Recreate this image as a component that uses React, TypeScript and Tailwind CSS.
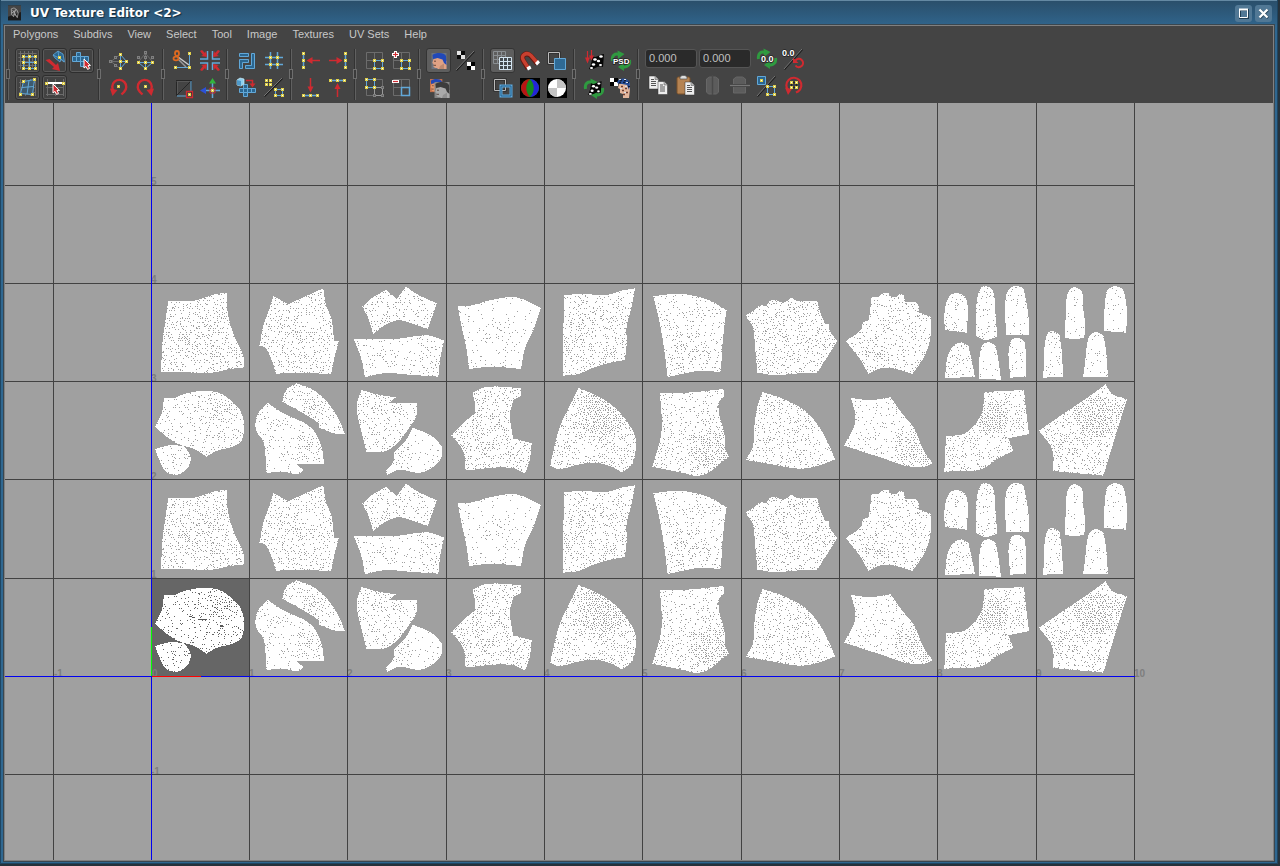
import React from "react";

/* ---------- UV shells ---------- */

type Shell = { pts: string; density: number; hot?: number[] };
type Block = { ox: number; upper: Shell[]; lower: Shell[] };

// Points are stored in thirds of a pixel, relative to (ox, 280).
const blocks: Block[] = [
  {
    ox: 150,
    upper: [
      { pts: "55,63 128,63 158,55 195,43 230,38 233,98 243,140 260,185 275,215 282,240 282,262 235,268 195,277 100,277 33,277 38,180 45,130", density: 0.38, hot: [150, 150, 60, 0.48] },
      { pts: "370,48 415,73 460,52 520,25 527,70 545,120 552,182 567,184 555,225 543,283 460,278 378,281 365,240 345,203 328,197 342,130 357,90", density: 0.34, hot: [410, 130, 40, 0.46] },
      { pts: "637,80 665,55 708,30 740,57 768,20 800,42 860,70 850,100 833,147 790,132 745,121 700,138 670,163 655,115", density: 0.3 },
      { pts: "612,178 745,176 800,168 840,167 882,182 872,230 865,290 790,285 700,280 645,292 635,240", density: 0.15, hot: [840, 220, 45, 0.36] },
    ],
    lower: [
      { pts: "42,354 75,353 100,343 160,333 210,340 250,368 276,402 276,480 265,492 195,515 170,530 135,508 85,492 50,470 15,440 35,400", density: 0.22, hot: [220, 375, 60, 0.44] },
      { pts: "15,507 65,495 105,500 122,535 108,570 75,585 45,572 28,540", density: 0.25 },
      { pts: "440,310 490,330 535,370 565,415 585,463 560,462 505,442 508,430 460,400 397,365 408,330", density: 0.3, hot: [490, 375, 35, 0.6] },
      { pts: "352,368 400,400 480,440 505,475 517,510 522,553 440,553 460,570 445,582 410,577 348,578 340,485 318,450 322,405", density: 0.17, hot: [480, 500, 45, 0.36] },
      { pts: "635,330 680,343 738,352 717,368 802,368 800,405 780,440 730,500 700,515 650,517 633,450 620,375", density: 0.28 },
      { pts: "788,443 845,468 877,500 875,530 850,560 810,578 745,570 712,585 708,573 730,545 733,518 765,485", density: 0.11, hot: [750, 520, 40, 0.3] },
    ],
  },
  {
    ox: 445,
    upper: [
      { pts: "38,77 75,77 130,62 215,52 288,84 265,150 240,205 228,267 140,260 72,267 65,210 50,140", density: 0.12, hot: [135, 150, 40, 0.3] },
      { pts: "357,45 420,42 480,46 530,32 570,25 560,80 545,140 545,190 540,240 500,247 440,265 400,282 355,287 355,170", density: 0.36 },
      { pts: "625,48 710,42 790,60 845,90 838,140 832,200 828,277 770,272 720,280 668,291 655,190 640,110", density: 0.25, hot: [740, 210, 55, 0.4] },
    ],
    lower: [
      { pts: "82,338 120,322 228,324 228,348 205,360 195,405 205,475 260,490 253,545 240,580 205,565 60,571 57,520 40,490 18,467 60,425 90,400 88,360", density: 0.38 },
      { pts: "400,324 450,345 500,375 550,430 572,475 572,510 560,555 530,577 500,560 445,548 395,555 340,567 315,557 345,440", density: 0.36, hot: [480, 395, 75, 0.9] },
      { pts: "645,340 740,337 835,327 838,348 823,365 822,400 838,460 842,510 852,530 765,588 720,580 622,560 640,500 650,450", density: 0.3, hot: [800, 510, 60, 0.75] },
    ],
  },
  {
    ox: 740,
    upper: [
      { pts: "18,106 40,92 60,77 80,77 90,63 105,60 130,68 145,60 155,53 170,62 232,62 240,95 255,132 268,132 268,150 292,183 232,278 180,280 100,285 52,278 45,200 38,140 20,112", density: 0.36 },
      { pts: "395,50 412,50 430,40 448,38 448,48 465,52 480,42 492,46 495,65 525,65 536,78 535,96 555,105 572,110 570,180 550,235 517,282 480,270 430,263 385,282 365,245 318,183 365,145 368,127 387,120", density: 0.31, hot: [405, 215, 25, 0.7] },
    ],
    lower: [
      { pts: "68,336 125,355 195,392 235,437 265,490 285,538 235,557 185,566 95,553 18,540 38,500 45,420 55,370", density: 0.34 },
      { pts: "333,354 390,360 452,352 490,405 520,440 550,510 578,550 555,560 500,558 430,535 312,497 345,430 345,400", density: 0.21, hot: [520, 510, 65, 0.65] },
    ],
  },
  {
    ox: 935,
    upper: [
      { pts: "30,150 28,110 35,65 50,43 68,40 88,48 97,70 95,158", density: 0.21 },
      { pts: "123,168 123,120 130,40 140,22 150,19 168,25 177,45 182,110 187,170 150,180", density: 0.22 },
      { pts: "213,165 213,50 222,28 243,17 265,25 275,70 282,130 282,165", density: 0.15 },
      { pts: "30,293 38,230 55,197 78,186 100,197 110,240 120,292", density: 0.24 },
      { pts: "132,297 135,220 145,193 162,186 182,197 190,240 198,299", density: 0.1 },
      { pts: "225,293 225,190 235,176 248,173 268,183 273,220 273,290", density: 0.11 },
      { pts: "390,173 392,110 397,45 408,25 422,21 440,35 445,90 450,130 448,173 420,178", density: 0.15 },
      { pts: "507,153 510,70 518,30 540,17 562,27 572,60 576,120 572,158", density: 0.11 },
      { pts: "325,293 330,190 340,158 352,152 373,162 380,210 384,290", density: 0.21 },
      { pts: "444,292 450,250 457,190 465,165 483,155 505,165 513,210 519,292", density: 0.15 },
    ],
    lower: [
      { pts: "147,336 267,330 272,380 282,462 220,475 235,512 190,535 140,567 28,575 33,468 90,460 140,400", density: 0.32, hot: [175, 410, 45, 0.9] },
      { pts: "512,313 530,340 576,357 550,440 505,587 355,573 352,510 312,452 380,405 440,365", density: 0.4, hot: [480, 410, 60, 0.9] },
    ],
  },
];

// Rounds the gentle bends of an outline and leaves its sharp corners alone.
function outline(pts: string): number[][] {
  const p = pts.split(" ").map((s) => s.split(",").map((v) => Number(v) / 3));
  const n = p.length;
  const tan = p.map((c, i) => {
    const a = p[(i + n - 1) % n];
    const b = p[(i + 1) % n];
    const u = [c[0] - a[0], c[1] - a[1]];
    const v = [b[0] - c[0], b[1] - c[1]];
    const lu = Math.hypot(u[0], u[1]);
    const lv = Math.hypot(v[0], v[1]);
    if ((u[0] * v[0] + u[1] * v[1]) / (lu * lv) < 0.66) return null;
    const w = [u[0] / lu + v[0] / lv, u[1] / lu + v[1] / lv];
    const lw = Math.hypot(w[0], w[1]);
    return [w[0] / lw, w[1] / lw];
  });
  const out: number[][] = [];
  for (let i = 0; i < n; i++) {
    const a = p[i];
    const b = p[(i + 1) % n];
    const len = Math.hypot(b[0] - a[0], b[1] - a[1]);
    const chord = [(b[0] - a[0]) / len, (b[1] - a[1]) / len];
    const ta = tan[i] ?? chord;
    const tb = tan[(i + 1) % n] ?? chord;
    for (let k = 0; k < 6; k++) {
      const t = k / 6;
      const h1 = 2 * t ** 3 - 3 * t ** 2 + 1;
      const h2 = t ** 3 - 2 * t ** 2 + t;
      const h3 = -2 * t ** 3 + 3 * t ** 2;
      const h4 = t ** 3 - t ** 2;
      out.push([0, 1].map((d) => h1 * a[d] + h2 * len * ta[d] + h3 * b[d] + h4 * len * tb[d]));
    }
  }
  return out;
}

function inside(x: number, y: number, poly: number[][]) {
  let hit = false;
  for (let i = 0, j = poly.length - 1; i < poly.length; j = i++) {
    const [xi, yi] = poly[i];
    const [xj, yj] = poly[j];
    if (yi > y !== yj > y && x < ((xj - xi) * (y - yi)) / (yj - yi) + xi) hit = !hit;
  }
  return hit;
}

// Gaps between the wireframe's vertices, drawn as one-pixel specks.
function specks(shell: Shell, poly: number[][]) {
  let seed = Math.round(poly[0][0] * 131 + poly[0][1] * 17) + 7;
  const rnd = () => {
    seed = (seed * 1664525 + 1013904223) % 4294967296;
    return seed / 4294967296;
  };
  const xs = poly.map((p) => p[0]);
  const ys = poly.map((p) => p[1]);
  let d = "";
  for (let y = Math.floor(Math.min(...ys)); y < Math.max(...ys); y += 2) {
    for (let x = Math.floor(Math.min(...xs)); x < Math.max(...xs); x += 2) {
      let p = shell.density;
      if (shell.hot) {
        const [hx, hy, hr, hp] = shell.hot;
        if (Math.hypot(x - hx / 3, y - hy / 3) < (hr / 3) * (0.7 + rnd() * 0.5)) p = hp;
      }
      const keep = rnd() < p;
      const px = x + (rnd() < 0.5 ? 0 : 1);
      const py = y + (rnd() < 0.25 ? 1 : 0);
      if (keep && inside(px + 0.5, py + 0.5, poly)) d += `M${px} ${py}h1v1h-1z`;
    }
  }
  return d;
}

function Shells({ row, y }: { row: "upper" | "lower"; y: number }) {
  return (
    <g shapeRendering="crispEdges">
      {blocks.map((b) =>
        b[row].map((s, i) => {
          const poly = outline(s.pts);
          return (
            <g key={`${b.ox}-${i}`} transform={`translate(${b.ox} ${y})`}>
              <polygon points={poly.map((p) => p.join(",")).join(" ")} fill="#fff" />
              <path d={specks(s, poly)} fill={y > 470 && row === "lower" && b.ox === 150 && i < 2 ? "#666" : "#a0a0a0"} />
            </g>
          );
        }),
      )}
    </g>
  );
}

const gridX = [53, 249, 347, 446, 544, 642, 741, 839, 937, 1036, 1134];
const gridY = [185, 283, 381, 479, 578, 774];
const labelsX: [number, string][] = [
  [54, "-1"], [152, "0"], [249, "1"], [347, "2"], [446, "3"], [544, "4"], [642, "5"],
  [741, "6"], [839, "7"], [937, "8"], [1036, "9"], [1134, "10"],
];
const labelsY: [number, string][] = [[185, "5"], [283, "4"], [382, "3"], [480, "2"], [578, "1"], [775, "-1"]];

function Viewport() {
  return (
    <svg className="block h-full w-full bg-[#a0a0a0]" role="img" aria-label="UV layout">
      <g transform="translate(-5 -103)">
        <rect x="152" y="579" width="97" height="97" fill="#666" />
        <g fill="#7e7e7e" fontFamily="'Liberation Sans', sans-serif" fontSize="10" fontWeight="700">
          {labelsX.map(([x, t]) => <text key={t} x={x} y="677">{t}</text>)}
          {labelsY.map(([y, t]) => <text key={t} x="151" y={y}>{t}</text>)}
        </g>
        <Shells row="upper" y={280} />
        <Shells row="lower" y={280} />
        <Shells row="upper" y={477} />
        <Shells row="lower" y={477} />
        <g fill="#424242">
          {gridX.map((x) => <rect key={x} x={x} y="103" width="1" height="3000" />)}
          {gridY.map((y) => <rect key={y} x="5" y={y} width="1130" height="1" />)}
        </g>
        <g fill="#555">
          <rect x="189" y="616" width="3" height="1" /><rect x="192" y="617" width="3" height="1" />
          <rect x="198" y="619" width="9" height="1" /><rect x="220" y="625" width="3" height="2" />
        </g>
        <rect x="151" y="103" width="1" height="3000" fill="#0000f0" />
        <rect x="5" y="676" width="1130" height="1" fill="#0000f0" />
        <rect x="151" y="627" width="1" height="49" fill="#00ff00" />
        <rect x="152" y="676" width="49" height="1" fill="#f00" />
      </g>
    </svg>
  );
}

/* ---------- Toolbar drawings (27 x 27 each) ---------- */

const BLUE = "#62a8d8";
const FILL = "#2b6690";
const LINE = "#6c6c6c";
const RED = "#cf2a30";

const P = ({ at, gray }: { at: number[][]; gray?: boolean }) => (
  <>
    {at.map(([x, y]) => (
      <g key={`${x},${y}`} shapeRendering="crispEdges">
        <rect x={x - 1} y={y - 1} width="3" height="3" fill={gray ? "#808080" : "#e0d04a"} />
        <rect x={x} y={y} width="1" height="1" fill={gray ? "#555" : "#fffff0"} />
      </g>
    ))}
  </>
);
const L = ({ d, c = BLUE, w = 1, f = "none" }: { d: string; c?: string; w?: number; f?: string }) => (
  <path d={d} stroke={c} strokeWidth={w} fill={f} />
);
const F = ({ d, c }: { d: string; c: string }) => <path d={d} fill={c} />;
const Cursor = ({ x, y }: { x: number; y: number }) => (
  <path transform={`translate(${x} ${y})`} d="M0 0v9l2-1.6 1.6 3 2-1-1.6-3H6.500z" fill={RED} stroke="#fff" strokeWidth="1" />
);
const Green = () => (
  <>
    <L d="M5.500 14C4.500 8.500 8 6 12 7.500M22.500 13c1 5-3 8-7 6.500" c="#2f9a40" w={3} />
    <F d="M10.500 3.500l7 3.500-6.500 5zM17 24l-6-4 5.500-4.500z" c="#2f9a40" />
  </>
);
const Checker = () => (
  <>
    <F d="M12 9c5 3 7-2 12-2l-1 13c-5-3-9 4-14 2 2-4 3-8 3-13z" c="#050505" />
    <g fill="#fff">
      <ellipse cx="15" cy="12.500" rx="1.800" ry="1.300" /><ellipse cx="21" cy="9.500" rx="1.800" ry="1.200" />
      <ellipse cx="18.500" cy="14" rx="1.700" ry="1.300" /><ellipse cx="13.500" cy="17.500" rx="1.700" ry="1.300" />
      <ellipse cx="20.500" cy="18" rx="1.500" ry="1.100" /><ellipse cx="11.500" cy="21" rx="1.600" ry="1" />
    </g>
  </>
);
const Quad = ({ s = 4 }: { s?: number }) => (
  <><rect width={s * 2} height={s * 2} fill="#000" /><path d={`M0 0h${s}v${s}h-${s}zM${s} ${s}h${s}v${s}h-${s}z`} fill="#fff" /></>
);
const Slash = ({ b = 22 }: { b?: number }) => (
  <><L d={`M22.500 4.500L4.500 ${b + 0.5}`} c="#1c1c1c" w={1.2} /><L d={`M22 4L4 ${b}`} c="#909090" w={0.7} /></>
);
const Page = ({ x, y }: { x: number; y: number }) => (
  <g transform={`translate(${x} ${y})`}>
    <path d="M0 0h6l3.500 3.500V13H0z" fill="#eee" stroke="#333" strokeWidth=".5" />
    <path d="M6 0v3.500h3.500" fill="#bbb" stroke="#555" strokeWidth=".5" />
    <path d="M2 3.500h3M2 5.500h5M2 7.500h5M2 9.500h5" stroke="#555" />
  </g>
);
const Head = ({ hair, skin, bg }: { hair: string; skin: string; bg: string }) => (
  <>
    <rect width="15" height="16" fill={bg} />
    <path d="M2 6L.8 10l1.200 1v3l2 1h2v1h9V8L9 4z" fill={skin} />
    <path d="M1 2C5-1 13-.5 14.500 3l.5 9-2.500-2-1.500-3.500-5-1.500-4.500 1z" fill={hair} />
    <path d="M2.500 8.200h2M2 12.300h2.500" stroke="#4a3028" strokeWidth=".8" />
    <path d="M7.500 16l1-3 4-2.500V16z" fill="#000" opacity=".15" />
  </>
);
const Rot = ({ flip }: { flip?: boolean }) => (
  <g transform={flip ? "translate(27 0) scale(-1 1)" : undefined}>
    <L d="M9 17.500A7 7 0 1 1 19 18L16.500 20.500" c={RED} w={2.4} />
    <F d="M5 14.500l7.500 1.500-5 6z" c={RED} />
    <P at={[[13, 12]]} />
  </g>
);
const Text = ({ x, y, s, t }: { x: number; y: number; s: number; t: string }) => (
  <text x={x} y={y} fontSize={s} fontWeight="700" fontFamily="'Liberation Sans', sans-serif" fill="#fff" stroke="#222" strokeWidth="1.500" paintOrder="stroke">{t}</text>
);
const gray4 = "M5.500 5.500h16v16h-16zM13.500 5.500v16M5.500 13.500h16";

const icons = {
  lattice: <>
    <L d="M6.500 4v18M10.500 4v18M14.500 4v18M18.500 4v18M4.500 6.500h18M4.500 10.500h18M4.500 14.500h18M4.500 18.500h18" c={LINE} />
    <L d="M9.500 9.500h12v12h-12zM15.500 9.500v12M9.500 15.500h12" />
    <P at={[[9, 9], [15, 9], [21, 9], [9, 15], [21, 15], [9, 21], [15, 21], [21, 21]]} /></>,
  move: <>
    <path d="M12 8l5-4 5 3 1.500 8-3.500-3-1 3-5-4z" fill={FILL} stroke={BLUE} strokeWidth=".8" />
    <L d="M17 4l1 7 5 4M12 8l6 3" w={.8} />
    <path d="M4.500 13l4-1 6.500 6 2-2 2 8-8-2 2-2z" fill={RED} />
    <P at={[[18, 10]]} /></>,
  shellSelect: <>
    <path d="M8.500 5.500h4v4h8v5h-4v5h-4v-5h-8v-5h4z" fill={FILL} stroke={BLUE} />
    <L d="M8.500 9.500h4v5h-4zM16.500 9.500v5h-4" /><Cursor x={16} y={12} /></>,
  deform: <>
    <L d="M6.500 5v17M11.500 5v17M16.500 5v17M21.500 5v17M5 8.500h17M5 13.500h17M5 18.500h17" c={LINE} />
    <path d="M9.500 7.500l11-2-2 15-12-1z" fill="#3d5a6e" stroke={BLUE} /><L d="M15 6.500l-2 14M8 13.500l11.500-1" />
    <P at={[[9, 7], [20, 5], [6, 20], [18, 20]]} /></>,
  pin: <>
    <L d="M6.500 5v17M14.500 5v17M22.500 5v17M5 13.500h17M5 20.500h17" c={LINE} />
    <L d="M6 9h16" c="#fff" w={2} /><P at={[[5, 9], [22, 9]]} /><Cursor x={12} y={10} /></>,
  flipU: <>
    <L d="M15 7.500L6 14.500l9 7M6 14.500h9" c={LINE} /><P gray at={[[5, 14], [10, 10], [10, 18]]} />
    <L d="M15.500 7.500v14M15.500 7.500l6 7-6 7M15.500 14.500h6" /><P at={[[15, 7], [15, 14], [21, 14], [15, 21]]} /></>,
  flipV: <>
    <L d="M6.500 14.500l7-8 7 8M13.500 5v9" c={LINE} /><P gray at={[[13, 5], [13, 10], [6, 10], [20, 10]]} />
    <L d="M6.500 15.500h14l-7 6zM13.500 15v7" /><P at={[[6, 15], [13, 15], [20, 15], [13, 21]]} /></>,
  rotL: <Rot />,
  rotR: <Rot flip />,
  cut: <>
    <L d="M20.500 6v14.500H6" /><L d="M9 10l11 8" c="#ccc" w={1.5} /><L d="M9 12l8 8" c="#999" w={1.5} />
    <ellipse cx="8" cy="6.500" rx="2" ry="2.500" fill="none" stroke="#e06a20" strokeWidth="1.800" />
    <ellipse cx="7" cy="11.500" rx="2.500" ry="1.800" fill="none" stroke="#e06a20" strokeWidth="1.800" />
    <P at={[[20, 6], [20, 20], [6, 20]]} /></>,
  sew: <>
    <L d="M11.500 4v8H4M16.500 4v8H24M11.500 23v-7H4M16.500 23v-7H24" w={1.5} />
    <F d="M4 4l2-1 3 3 1-2 1 6-6-1 2-1zM24 4l-2-1-3 3-1-2-1 6 6-1-2-1zM4 23l2 1 3-3 1 2 1-6-6 1 2 1zM24 23l-2 1-3-3-1 2-1-6 6 1-2 1z" c={RED} /></>,
  split: <>
    <L d="M7 6.500h15.500v13M7.500 21.500l15-15M7.500 7v14.500" c="#262626" w={1} /><L d="M7.500 7.500h13M8.500 8v12" c="#666" w={.6} /><L d="M8 22h10M22 7v11" c={BLUE} w={1} />
    <L d="M17.500 17.500h6v6h-6z" c={RED} w={1.3} /><P at={[[20, 20]]} /></>,
  axes: <>
    <L d="M16.500 16v8M16 16.500h8M10 16.500h6M16.500 9v7" w={1.5} />
    <F d="M16.500 4l3.500 5.500h-7z" c="#32b53c" /><F d="M4 16.500l6-3.500v7z" c="#2c50d8" />
    <L d="M14 14h5v5h-5z" c={RED} w={1} /><P at={[[16, 16]]} /></>,
  layout: <>
    <path d="M6.500 6.500h9v3h-9zM18.500 6.500h3v15h-9v-3h6zM6.500 12.500h9v3h-6v6h-3z" fill={FILL} stroke={BLUE} /></>,
  hash: <>
    <L d="M10.500 5v17M17.500 5v17M5 10.500h18M5 17.500h18" w={1.5} /><P at={[[10, 10], [17, 10], [10, 17], [17, 17]]} /></>,
  unfold: <>
    <path d="M10.500 10.500h4v4h8v4h-8v4h-4v-4h-4v-4h4z" fill={FILL} stroke={BLUE} /><L d="M10.500 14.500h4v4h-4zM18.500 14.500v4" />
    <path d="M4 6l3-2 4 1v5l-3 2-4-1z" fill="#8fd0ee" stroke="#cdeefc" strokeWidth=".7" /><F d="M4 6l4 1v5l-4-1z" c="#4d98c8" />
    <L d="M13 6.500h6.500V11" c={RED} w={1.5} /><F d="M16.500 9.500h6l-3 4z" c={RED} /></>,
  regroup: <>
    <Slash />
    <L d="M15.500 15.500h7v6h-7z" /><P at={[[6, 6], [10, 6], [6, 10], [10, 10], [15, 15], [22, 15], [15, 21], [22, 21]]} /></>,
  alignL: <>
    <L d="M6.500 7v14" w={1.500} /><P at={[[6, 6], [6, 13], [6, 20]]} /><L d="M23 13.500H14" c={RED} w={1.5} /><F d="M9.500 13.500l6-3.500v7z" c={RED} /></>,
  alignR: <>
    <L d="M21.500 7v14" w={1.500} /><P at={[[21, 6], [21, 13], [21, 20]]} /><L d="M5 13.500h9" c={RED} w={1.5} /><F d="M18.500 13.500l-6-3.500v7z" c={RED} /></>,
  alignD: <>
    <L d="M6 21.500h15" w={1.500} /><P at={[[6, 21], [13, 21], [20, 21]]} /><L d="M13.500 4v9" c={RED} w={1.5} /><F d="M13.500 18.500l-3-6h6z" c={RED} /></>,
  alignU: <>
    <L d="M6 6.500h15" w={1.500} /><P at={[[6, 6], [13, 6], [20, 6]]} /><L d="M13.500 23v-9" c={RED} w={1.5} /><F d="M13.500 9l-3 6h6z" c={RED} /></>,
  isolate: <><L d={gray4} c={LINE} /><L d="M13.500 13.500h8v8h-8z" /><P at={[[13, 13], [21, 13], [13, 21], [21, 21]]} /></>,
  isolateAdd: <>
    <L d={gray4} c={LINE} /><L d="M13.500 13.500h8v8h-8z" /><P at={[[13, 13], [21, 13], [13, 21], [21, 21]]} />
    <F d="M6 4h3v2h2v3H9v2H6V9H4V6h2z" c="#fff" /><L d="M7.500 5v5M5 7.500h5" c={RED} w={1.200} /></>,
  isolateAll: <>
    <L d={gray4} c={LINE} /><L d="M13.500 13.500h8v8h-8z" c="#999" /><L d="M5.500 5.500h8v8h-8z" /><P gray at={[[21, 13], [13, 21], [21, 21]]} /><P at={[[5, 5], [13, 5], [5, 13], [13, 13]]} /></>,
  isolateRemove: <>
    <L d={gray4} c={LINE} /><L d="M13.500 13.500h8v8h-8z" w={1.500} /><F d="M4 6h7v3H4z" c="#fff" /><L d="M5 7.500h5" c={RED} w={1.200} /></>,
  image: <g transform="translate(6.500 6)"><Head hair="#2148b8" skin="#dfa184" bg="#6d7480" /></g>,
  filter: <>
    <Slash b={23} />
    <g transform="translate(5 4)" opacity=".85"><Quad /></g><g transform="translate(15 15)"><Quad /></g></>,
  dim: <>
    <g transform="translate(5 5) scale(.82)"><Head hair="#2148b8" skin="#e6976c" bg="#c0704c" /></g>
    <g transform="translate(9.500 8)"><Head hair="#3c3c3c" skin="#aaa" bg="#858585" /></g></>,
  grid: <>
    <L d="M4.500 4.500h12v12h-12zM8.500 4.500v12M12.500 4.500v12M4.500 8.500h12M4.500 12.500h12" c="#8a8f93" />
    <path d="M10.500 10.500h12v12h-12zM14.500 10.500v12M18.500 10.500v12M10.500 14.500h12M10.500 18.500h12" fill="#43494e" stroke="#d3e4f0" /></>,
  snap: <>
    <L d="M12 21.500L7.500 14C4 8 10.500 4.500 15 9l6.500 8" c="#651710" w={5} />
    <L d="M12 20.500L7.500 13.500C4 8 10.500 4.500 15 8.500l6.500 7.500" c="#c9402f" w={3.500} />
    <F d="M19 16l3-3 2 2.500-3 3zM10.500 20.500l3.500-2 1.500 3-3.500 2z" c="#fff" /></>,
  overlap: <>
    <L d="M5.500 5.500h11v11h-11z" c="#222" w={2} /><L d="M5.500 5.500h11v11h-11z" c="#bbb" />
    <path d="M11.500 11.500h11v11h-11z" fill="#2f6a95" stroke={BLUE} /></>,
  borders: <>
    <L d="M5.500 5.500h11v11h-11z" c="#222" w={2} /><L d="M5.500 5.500h11v11h-11z" c="#bbb" />
    <L d="M12 12h10v10H12z" c="#5ea8dc" w={3} /><L d="M12 12h10v10H12z" c="#23608b" w={1} /></>,
  rgb: <>
    <rect x="4" y="4" width="20" height="20" fill="#000" /><circle cx="14" cy="14" r="9" fill="#168a20" />
    <F d="M14 5a9 9 0 0 0 0 18c-5-5-5-13 0-18z" c="#b81414" /><F d="M14 5a9 9 0 0 1 0 18c5-5 5-13 0-18z" c="#2424d8" /></>,
  alpha: <>
    <rect x="4" y="4" width="20" height="20" fill="#000" /><circle cx="14" cy="14" r="9" fill="#fff" />
    <F d="M14 5a9 9 0 0 1 9 9h-9zM14 23a9 9 0 0 1-9-9h9z" c="#c4c4c4" /></>,
  bake: <>
    <Checker /><L d="M7.500 4v7M11.500 3v6" c={RED} w={1.200} /><F d="M5 10.500h5l-2.500 6zM9 8.500h5l-2.500 5z" c={RED} /></>,
  psd: <><Green /><Text x={6} y={17} s={8} t="PSD" /></>,
  refresh: <><g transform="translate(0 1)"><Green /></g><g transform="translate(0 1) scale(.9)"><Checker /></g></>,
  uvHead: <>
    <g transform="translate(3 4)"><Quad /></g>
    <F d="M12 10l-1 4 2 1v4l3 1v4h6l1-9V9z" c="#e3b69c" /><F d="M10 9c1-6 12-6 13 1l-1 6-2-5z" c="#274f9b" />
    <L d="M12 8.500h2m2 0h2m2 0h2M13 6.500h2m2 0h2M21 12.500h2" c="#111c3a" w={1.500} />
    <L d="M14 12.500h2m2 2h2m-5 2h2m2 2h2m-5 2h2" c="#6a3c30" w={1.500} />
    <L d="M12 5.500h2m3 0h2M19 8.500h2M13 14.500h2m3-2h2m-3 6h2" c="#d7dfea" w={1.200} /></>,
  zeroGreen: <><Green /><Text x={8} y={17} s={9} t="0.0" /></>,
  zeroRed: <>
    <Slash b={24} /><Text x={2} y={11} s={9} t="0.0" />
    <L d="M15.500 15.500A4.200 4.200 0 1 1 15.500 20.500" c={RED} w={2} /><F d="M13 12.500v5.500h5.500z" c={RED} /></>,
  copy: <><Page x={4} y={4} /><Page x={13} y={9.500} /></>,
  paste: <>
    <rect x="5" y="5" width="13" height="17" rx="1.500" fill="#b58352" stroke="#7a5028" /><path d="M8 7V5l2-1.500h3L15 5v2z" fill="#ddd" stroke="#555" strokeWidth=".7" /><Page x={13} y={10} /></>,
  mirrorU: <>
    <path d="M7.500 7l3-2h6l3 2v13l-2 2h-8l-2-2z" fill="#5c5c5c" stroke="#676767" /><L d="M13.500 3v20" c="#494949" w={1.5} /></>,
  mirrorV: <>
    <path d="M7.500 7l3-2h6l3 2v14h-12z" fill="#5c5c5c" stroke="#676767" /><L d="M4 13.500h20" c="#494949" w={3} /><L d="M4 13.500h20" c="#777" /></>,
  transfer: <>
    <path d="M4.500 4.500h8v8h-8z" fill={FILL} stroke={BLUE} /><P at={[[8, 8]]} />
    <Slash b={24} />
    <L d="M14.500 14.500h7v8h-7z" /><P at={[[14, 14], [21, 14], [14, 22], [21, 22]]} /></>,
  cycle: <>
    <L d="M9 19A7.500 7.500 0 1 1 18 19.500L16 20.500" c={RED} w={2.2} /><F d="M5 15.500l7 1.500-4 6z" c={RED} />
    <path d="M11.500 10.500h5v5h-5z" fill="none" stroke="#222" /><P at={[[11, 10], [16, 10], [11, 15], [16, 15]]} /></>,
};
type IconName = keyof typeof icons;
type Item = [IconName, string, ("frame" | "lit" | "off")?];

function Tool({ item: [name, label, look] }: { item: Item }) {
  return (
    <button
      type="button"
      aria-label={label}
      title={label}
      disabled={look === "off"}
      className="relative h-[27px] w-[27px] shrink-0"
    >
      {(look === "frame" || look === "lit") && (
        <span
          className={
            look === "lit"
              ? "absolute inset-x-px inset-y-px rounded-[3px] border border-[#343434] bg-[#5e5e5e]"
              : "absolute inset-x-[2px] inset-y-[2px] rounded-[2px] border border-[#5a5a5a] bg-[#424242] outline outline-[#2e2e2e]"
          }
        />
      )}
      <svg viewBox="0 0 27 27" className="relative block h-[27px] w-[27px]" aria-hidden="true">{icons[name]}</svg>
    </button>
  );
}

const groups: Item[][][] = [
  [[["lattice", "Lattice", "frame"], ["move", "Move UV shell", "frame"], ["shellSelect", "Select shell", "frame"]],
   [["deform", "Smudge", "frame"], ["pin", "Pin", "frame"]]],
  [[["flipU", "Flip U"], ["flipV", "Flip V"]], [["rotL", "Rotate left"], ["rotR", "Rotate right"]]],
  [[["cut", "Cut"], ["sew", "Sew"]], [["split", "Split"], ["axes", "Move and sew"]]],
  [[["layout", "Layout"], ["hash", "Snap to grid"]], [["unfold", "Unfold"], ["regroup", "Cycle"]]],
  [[["alignL", "Align min U"], ["alignR", "Align max U"]], [["alignD", "Align min V"], ["alignU", "Align max V"]]],
  [[["isolate", "Isolate"], ["isolateAdd", "Isolate add"]], [["isolateAll", "Isolate all"], ["isolateRemove", "Isolate remove"]]],
  [[["image", "Display image", "lit"], ["filter", "Filter image"]], [["dim", "Dim image"]]],
  [[["grid", "View grid", "lit"], ["snap", "Pixel snap"], ["overlap", "Shade UVs"]],
   [["borders", "Texture borders"], ["rgb", "Display RGB"], ["alpha", "Display alpha"]]],
  [[["bake", "Bake editor"], ["psd", "Update PSD"]], [["refresh", "Force rebake"], ["uvHead", "Checker"]]],
];

function Handle({ first }: { first?: boolean }) {
  return (
    <span className={first ? "flex w-[9px] items-center pl-px" : "flex w-[10px] items-center pl-[2px]"} aria-hidden="true">
      <svg viewBox="0 0 4 54" className="h-[54px] w-1">
        <path d="M1.500 2v20M1.500 32v21" stroke="#333" />
        <path d="M2.500 2v20M2.500 32v21" stroke="#606060" />
        <rect x=".5" y="22.500" width="3" height="9" fill="#3a3a3a" stroke="#6e6e6e" />
      </svg>
    </span>
  );
}

const fieldClass =
  "mr-[2px] h-[19px] w-[52px] rounded-[3px] border border-[#555] bg-[#2a2a2a] px-[3px] font-['Liberation_Sans',sans-serif] text-[11px] leading-[17px] text-[#c0c0c0] outline-none";

const menus = ["Polygons", "Subdivs", "View", "Select", "Tool", "Image", "Textures", "UV Sets", "Help"];

export default function App() {
  return (
    <div className="flex h-screen bg-[#26323b] font-['Liberation_Sans',sans-serif]">
      <div className="mr-[2px] mb-[2px] flex min-w-0 flex-1 flex-col border-x border-b border-[#1f4560] bg-[#2f6790] px-[3px] pb-[2px]">
        <header className="-mx-[3px] flex h-[25px] shrink-0 items-center border-t border-[#6489a3] bg-gradient-to-b from-[#2a4f6b] to-[#30648b] pr-[5px] pl-[7px]">
          <svg viewBox="0 0 14 16" className="h-4 w-[13px]" aria-hidden="true">
            <rect width="14" height="16" fill="#1b1b1b" />
            <path d="M0 0h14v7L0 12z" fill="#454545" />
            <path d="M3.500 3.500l3-1 3 2 1.500 3.500-1 5-3-4-1 3-2-2zM5 5l4 6M8 4L6 11M4 8l5-3" fill="none" stroke="#b4b4b4" strokeWidth=".8" />
          </svg>
          <h1 className="ml-[9px] flex-1 font-['DejaVu_Sans',sans-serif] text-[12px] font-bold text-white [text-shadow:1px_1px_1px_#132a3b]">
            UV Texture Editor &lt;2&gt;
          </h1>
          <button type="button" aria-label="Maximize" className="mr-[3px] flex h-[17px] w-[17px] items-center justify-center rounded-[3px] bg-[#517895]">
            <svg viewBox="0 0 17 17" className="h-[17px] w-[17px]" aria-hidden="true">
              <path d="M5 5h8v8H5z" fill="none" stroke="#1f3d52" strokeWidth="2" /><path d="M4.500 4.500h8v8h-8z" fill="none" stroke="#fff" /><path d="M4 4.500h9" stroke="#fff" strokeWidth="2" />
            </svg>
          </button>
          <button type="button" aria-label="Close" className="flex h-[17px] w-[17px] items-center justify-center rounded-[3px] bg-[#517895]">
            <svg viewBox="0 0 17 17" className="h-[17px] w-[17px]" aria-hidden="true">
              <path d="M5 5l8 8M13 5l-8 8" stroke="#1f3d52" strokeWidth="2.500" /><path d="M4.500 4.500l8 8M12.500 4.500l-8 8" stroke="#fff" strokeWidth="2.300" />
            </svg>
          </button>
        </header>
        <main className="flex min-h-0 flex-1 flex-col border border-[#808080] bg-[#444] outline outline-[#3a4750]">
          <nav className="flex h-[17px] shrink-0 items-center gap-[15px] pl-2 text-[11px] leading-[17px] text-[#c8c8c8]">
            {menus.map((m) => <button key={m} type="button">{m}</button>)}
          </nav>
          <div className="flex h-[60px] shrink-0 items-center pt-px">
            {groups.map((rows, i) => (
              <React.Fragment key={i}>
                <Handle first={i === 0} />
                <div className="flex flex-col">
                  {rows.map((row, r) => (
                    <div key={r} className="flex">{row.map((it) => <Tool key={it[0]} item={it} />)}</div>
                  ))}
                </div>
              </React.Fragment>
            ))}
            <Handle />
            <div className="flex flex-col pb-1 pl-px">
              <div className="flex items-center">
                <input aria-label="U value" defaultValue="0.000" className={fieldClass} />
                <input aria-label="V value" defaultValue="0.000" className={fieldClass} />
                <Tool item={["zeroGreen", "Refresh values"]} />
                <Tool item={["zeroRed", "Entry mode"]} />
              </div>
              <div className="flex">
                <Tool item={["copy", "Copy"]} />
                <Tool item={["paste", "Paste"]} />
                <Tool item={["mirrorU", "Paste U", "off"]} />
                <Tool item={["mirrorV", "Paste V", "off"]} />
                <Tool item={["transfer", "Copy mode"]} />
                <Tool item={["cycle", "Cycle UVs"]} />
              </div>
            </div>
          </div>
          <div className="min-h-0 flex-1">
            <Viewport />
          </div>
        </main>
      </div>
    </div>
  );
}
